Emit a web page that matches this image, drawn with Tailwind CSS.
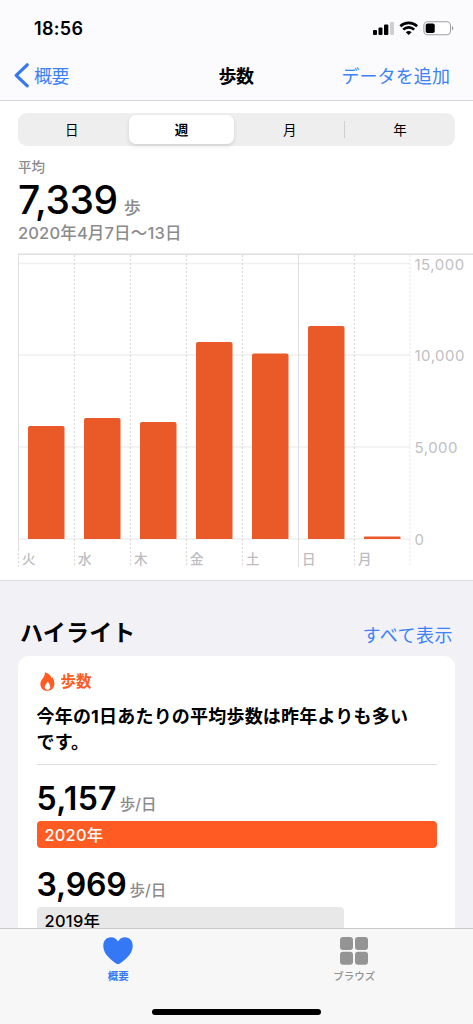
<!DOCTYPE html>
<html lang="ja">
<head>
<meta charset="utf-8">
<meta name="viewport" content="width=device-width, initial-scale=1">
<title>歩数</title>
<script src="https://cdn.jsdelivr.net/npm/@tailwindcss/browser@4"></script>
</head>
<body class="bg-[#f2f1f6]">
<div class="flex h-[1024px] w-[473px] flex-col overflow-hidden whitespace-nowrap bg-[#f2f1f6] font-['Inter','Noto_Sans_CJK_JP',sans-serif] text-black">

  <header class="h-[101px] shrink-0 border-b border-[#d4d4d6] bg-[#fbfbfd]">
    <div class="flex h-[50px] items-center justify-between pt-[6px] pl-[34px] pr-[18px]">
      <span class="pt-[2px] text-[18px] font-semibold leading-6 tracking-[0.3px]">18:56</span>
      <svg width="83" height="16" viewBox="372 20 83 16">
        <rect x="373" y="30" width="4" height="5" rx="1"/>
        <rect x="378.500" y="27.500" width="4" height="7.500" rx="1"/>
        <rect x="384" y="24.500" width="4.300" height="10.500" rx="1"/>
        <rect x="390" y="22" width="4" height="13" rx="1" fill="#cfcfd1"/>
        <g fill="none" stroke="#000" stroke-width="2.600">
          <path d="M400.300 26.200a12.200 12.200 0 0 1 16.800 0"/>
          <path d="M403.200 29.600a8 8 0 0 1 11 0"/>
        </g>
        <path d="M405.800 32.200a4.300 4.300 0 0 1 5.800 0l-2.900 2.900z"/>
        <rect x="423.900" y="21.700" width="26.600" height="13" rx="3.800" fill="#fff" stroke="#a0a0a2" stroke-width="1.100"/>
        <rect x="425.700" y="23.500" width="9" height="9.600" rx="1.800"/>
        <path d="M452 26.200c1.700.6 1.700 3.400 0 4z" fill="#8e8e90"/>
      </svg>
    </div>
    <div class="grid h-[50px] grid-cols-[1fr_auto_1fr] items-center pl-[14px] pr-[23px] text-[18px] leading-6 text-[#3b82f7]">
      <div class="flex items-center gap-[4px]">
        <svg width="16" height="26" viewBox="0 0 16 26" fill="none" stroke="#3478f6" stroke-width="3.200" stroke-linecap="round" stroke-linejoin="round"><path d="M13.200 2.800 2.200 13.300 13.200 23.800"/></svg>
        <span class="pt-[3px] tracking-[-0.4px]">概要</span>
      </div>
      <h1 class="pl-[8px] pt-[3px] font-bold tracking-[-0.4px] text-black">歩数</h1>
      <span class="pt-[3px] text-right tracking-[0.1px]">データを追加</span>
    </div>
  </header>

  <section class="h-[480px] shrink-0 border-b border-[#dcdce0] bg-white">
    <div class="px-[18px] pt-[12px]">
      <div class="grid h-[33px] w-[437px] grid-cols-4 items-center rounded-[9px] bg-[#eeeeef] text-center text-[13.500px] leading-5">
        <span class="pr-[2px]">日</span>
        <span class="ml-[2px] mr-[3px] h-[29px] rounded-[7px] bg-white font-bold leading-[31px] shadow-[0_2px_4px_rgba(0,0,0,0.12)]">週</span>
        <span class="pr-[3px]">月</span>
        <span class="-ml-[2px] h-[17px] border-l border-[#cfcfd1] leading-[19px]">年</span>
      </div>
      <p class="mt-[11px] h-[20px] text-[13.500px] font-medium leading-5 text-[#8b8b8d]">平均</p>
      <p class="flex h-[45px] items-baseline gap-[6px]"><span class="text-[39px] font-medium leading-[46px] tracking-[-0.4px]">7,339</span><span class="text-[17px] font-medium text-[#8b8b8d]">歩</span></p>
      <p class="h-[22px] text-[16.500px] font-medium leading-[22px] tracking-[0.15px] text-[#8b8b8d]">2020年4月7日〜13日</p>
    </div>
    <svg class="mt-[8px] block" width="473" height="327" viewBox="0 252 473 327">
      <path d="M18 254.200H473" stroke="#dedee0" stroke-width="1.500"/>
      <g stroke="#f0f0f0" stroke-width="1.300"><path d="M18 263.500H410M18 355H410M18 447H410M18 539H410"/></g>
      <path d="M18.500 254V549M298.500 254V567" stroke="#dfdfe1"/>
      <path d="M18.500 549V567M74.500 255V567M130.500 255V567M186.500 255V567M242.500 255V567M354.500 255V567" stroke="#dcdcde" stroke-width="1.200" stroke-dasharray="2.200 1.800"/>
      <path d="M410 255V567" stroke="#e6e6e8" stroke-dasharray="2.200 1.800"/>
      <g fill="#ea5928">
        <path d="M28 539V428q0-2 2-2h32.500q2 0 2 2V539z"/>
        <path d="M84 539V420q0-2 2-2h32.500q2 0 2 2V539z"/>
        <path d="M140 539V424q0-2 2-2h32.500q2 0 2 2V539z"/>
        <path d="M196 539V344q0-2 2-2h32.500q2 0 2 2V539z"/>
        <path d="M252 539V355.500q0-2 2-2h32.500q2 0 2 2V539z"/>
        <path d="M308 539V328q0-2 2-2h32.500q2 0 2 2V539z"/>
        <path d="M364 539V537.500q0-1 1-1h34.500q1 0 1 1V539z"/>
      </g>
      <g fill="#c0c0c2" font-size="15" letter-spacing="0.5">
        <text x="414.500" y="269.500">15,000</text>
        <text x="414.500" y="361">10,000</text>
        <text x="414.500" y="453">5,000</text>
        <text x="414.500" y="545">0</text>
      </g>
      <g fill="#bdbdbf" font-size="13.500" font-weight="500">
        <text x="22" y="563.500">火</text><text x="78" y="563.500">水</text><text x="134" y="563.500">木</text><text x="190" y="563.500">金</text><text x="246" y="563.500">土</text><text x="302" y="563.500">日</text><text x="358" y="563.500">月</text>
      </g>
    </svg>
  </section>

  <main class="h-[347px] shrink-0 overflow-hidden px-[18px] pt-[32px]">
    <div class="flex h-[43px] items-start justify-between pl-[2px] pr-[2px]">
      <h2 class="pt-[4px] text-[23px] font-bold leading-8 tracking-[0.2px]">ハイライト</h2>
      <span class="pt-[11px] text-[18px] leading-6 tracking-[0.5px] text-[#3b82f7]">すべて表示</span>
    </div>
    <article class="h-[400px] w-[437px] rounded-t-[11px] bg-white px-[18.500px] pt-[12px]">
      <div class="flex h-[28px] items-center gap-[6px] pl-[3px] text-[#ff5b23]">
        <svg class="-mt-[2px]" width="15" height="19" viewBox="0 0 15 19"><path fill="#ff5b23" fill-rule="evenodd" d="M4.800.2C8.600 1 11 3.500 11.600 6.400c.3-.4.500-.9.600-1.300 1.500 2 2.200 4.300 2.200 6.700 0 4.200-2.900 7-7 7S.4 16 .4 11.900C.4 7.300 5.500 5.300 4.800.2zM7.800 9.200c-.6 2-3.100 3.300-3.100 5.700 0 1.700 1.100 2.800 2.800 2.800s2.800-1.200 2.800-2.900c0-2.200-1.600-3.400-2.500-5.600z"/></svg>
        <span class="text-[15.500px] font-bold leading-6">歩数</span>
      </div>
      <p class="mt-[8px] h-[61px] border-b border-[#dddddf] text-[18px] font-bold leading-[26px] tracking-[0.2px]">今年の1日あたりの平均歩数は昨年よりも多い<br>です。</p>
      <p class="mt-[12px] flex h-[44px] items-baseline gap-[3px]"><span class="text-[32px] font-semibold leading-[44px] tracking-[0.3px]">5,157</span><span class="text-[15.500px] font-medium text-[#8b8b8d]">歩/日</span></p>
      <div class="h-[27px] rounded-[4px] bg-[#ff5b23] pl-[8px] text-[16.400px] font-medium leading-[28px] tracking-[0.2px] text-white">2020年</div>
      <p class="mt-[15px] flex h-[44px] items-baseline gap-[3px]"><span class="text-[32px] font-semibold leading-[44px] tracking-[-0.2px]">3,969</span><span class="text-[15.500px] font-medium text-[#8b8b8d]">歩/日</span></p>
      <div class="h-[27px] w-[307px] rounded-[4px] bg-[#e8e8e8] pl-[8px] text-[16.400px] font-medium leading-[28px] tracking-[0.3px]">2019年</div>
    </article>
  </main>

  <nav class="flex h-[96px] shrink-0 flex-col border-t border-[#c9c9cb] bg-[#f7f7f7]">
    <div class="grid h-[80px] grid-cols-2 text-[10.500px] font-medium leading-4">
      <div class="flex flex-col items-center pt-[7px] text-[#3478f6]">
        <svg width="30" height="29" viewBox="0 0 30 29"><path fill="#3478f6" d="M15 28c-1.200 0-2.500-1-4-2.100C5 21.500.3 16.500.3 9.800.3 4.800 3.500 1.300 7.900 1.300c3.200 0 5.600 1.500 7.100 4.300 1.500-2.800 3.900-4.300 7.100-4.300 4.400 0 7.600 3.500 7.600 8.500 0 6.700-4.700 11.700-10.700 16.100C17.500 27 16.200 28 15 28z"/></svg>
        <span class="mt-[4px] font-bold">概要</span>
      </div>
      <div class="flex flex-col items-center pt-[7px] pr-[1px] text-[#929292]">
        <svg width="28" height="29" viewBox="0 0 28 29" fill="#949494"><rect x="0" y="1" width="13" height="13" rx="3"/><rect x="15" y="1" width="13" height="13" rx="3"/><rect x="0" y="15.700" width="13" height="13" rx="3"/><rect x="15" y="15.700" width="13" height="13" rx="3"/></svg>
        <span class="mt-[4px]">ブラウズ</span>
      </div>
    </div>
    <div class="mx-auto h-[6px] w-[169px] rounded-full bg-black"></div>
  </nav>
</div>
</body>
</html>
